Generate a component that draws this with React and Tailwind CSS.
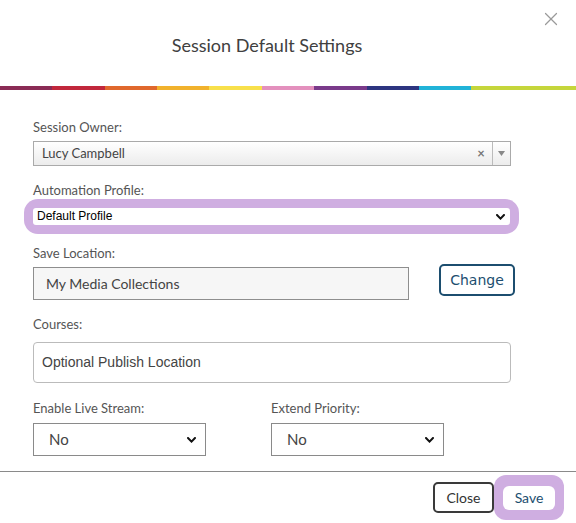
import { X } from "lucide-react";

const stripe = [
  "#8a2b55",
  "#c1273c",
  "#e0682d",
  "#f1b22d",
  "#f8e04b",
  "#e390bd",
  "#7a3a8a",
  "#2d3580",
  "#21b3d8",
  "#c5d63b",
];

function Chevron() {
  return (
    <svg width="9" height="6" viewBox="0 0 9 6" className="pointer-events-none">
      <path d="M1 1 4.5 4.6 8 1" fill="none" stroke="#111" strokeWidth="2" strokeLinecap="round" />
    </svg>
  );
}

function Label({ children }) {
  return <div className="text-[13px] leading-4 text-[#555] font-['Lato',sans-serif]">{children}</div>;
}

function NoSelect() {
  return (
    <div className="flex h-[33px] w-[173px] items-center justify-between border border-[#8a8a8a] bg-white pl-[15px] pr-[9px]">
      <span className="text-[15px] text-[#444] font-['Lato',sans-serif]">No</span>
      <Chevron />
    </div>
  );
}

export default function App() {
  return (
    <div className="h-[523px] w-[576px] overflow-hidden bg-white font-['Lato',sans-serif]">
      {/* header */}
      <div className="relative flex h-[86px] items-start justify-center pt-[33px] pr-[42px]">
        <h1 className="text-[18px] leading-6 text-[#404040]">Session Default Settings</h1>
        <button className="absolute right-[14px] top-[8px] text-[#9a9a9a]">
          <X size={22} strokeWidth={1.3} />
        </button>
      </div>
      <div className="flex h-[4px]">
        {stripe.map((c, i) => (
          <div key={i} className={i === stripe.length - 1 ? "flex-[2]" : "flex-1"} style={{ backgroundColor: c }} />
        ))}
      </div>

      {/* form */}
      <div className="px-[33px] pt-[29px] pb-[15px]">
        <Label>Session Owner:</Label>
        <div className="mt-[6px] flex h-[25px] w-[478px] border border-[#aaa] bg-gradient-to-b from-white to-[#ececec]">
          <div className="flex flex-1 items-center pl-[8px] text-[13px] text-[#444]">Lucy Campbell</div>
          <div className="flex w-[22px] items-center justify-center text-[13px] font-bold text-[#777]">×</div>
          <div className="flex w-[18px] items-center justify-center border-l border-[#bbb]">
            <svg width="7" height="5" viewBox="0 0 7 5">
              <path d="M0 0h7L3.5 5z" fill="#888" />
            </svg>
          </div>
        </div>

        <div className="mt-[16px]">
          <Label>Automation Profile:</Label>
        </div>
        <div className="-ml-[9px] mt-[1px] w-[495px] rounded-[14px] bg-[#cfaee1] px-[9px] py-[9px]">
          <div className="flex h-[17px] items-center justify-between rounded-[3px] bg-white pl-[4px] pr-[5px]">
            <span className="text-[12px] leading-[17px] text-black font-['Liberation_Sans',sans-serif]">Default Profile</span>
            <Chevron />
          </div>
        </div>

        <div className="mt-[11px]">
          <Label>Save Location:</Label>
        </div>
        <div className="mt-[3px] flex items-start">
          <div className="mt-[3px] flex h-[33px] w-[376px] items-center border border-[#8e8e8e] bg-[#f6f6f6] pl-[12px] text-[14px] text-[#444]">
            My Media Collections
          </div>
          <button className="ml-[30px] h-[32px] w-[76px] rounded-[5px] border-2 border-[#1c4e6f] text-[14px] text-[#1c4e6f] font-['DejaVu_Sans',sans-serif]">
            Change
          </button>
        </div>

        <div className="mt-[16px]">
          <Label>Courses:</Label>
        </div>
        <div className="mt-[10px] flex h-[41px] w-[478px] items-center rounded-[4px] border border-[#bbb] bg-white pl-[8px] text-[14px] text-[#444] font-['Liberation_Sans',sans-serif]">
          Optional Publish Location
        </div>

        <div className="mt-[17px] flex gap-[65px]">
          <div className="flex flex-col gap-[7px]">
            <Label>Enable Live Stream:</Label>
            <NoSelect />
          </div>
          <div className="flex flex-col gap-[7px]">
            <Label>Extend Priority:</Label>
            <NoSelect />
          </div>
        </div>
      </div>

      {/* footer */}
      <div className="flex items-center justify-end border-t border-[#8a8a8a] pt-[3px] pr-[12px]">
        <button className="h-[31px] w-[61px] rounded-[5px] border-2 border-[#3a3a3a] text-[14px] text-[#333]">
          Close
        </button>
        <div className="rounded-[12px] bg-[#cfaee1] px-[9px] py-[10px]">
          <button className="h-[24px] w-[52px] rounded-[6px] bg-white text-[14px] text-[#1c4e6f]">Save</button>
        </div>
      </div>
    </div>
  );
}
